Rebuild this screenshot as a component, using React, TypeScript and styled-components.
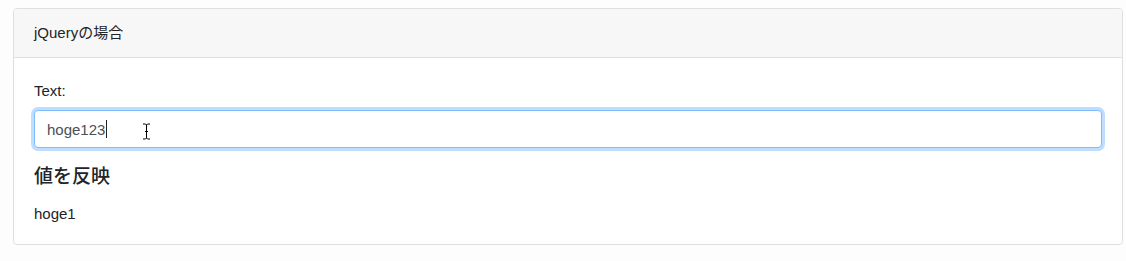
import React from "react";
import styled, { createGlobalStyle } from "styled-components";

const GlobalStyle = createGlobalStyle`
  html, body {
    margin: 0;
    padding: 0;
    background: #fdfdfd;
  }
  body {
    font-family: "Liberation Sans", Arial, "Noto Sans CJK JP", sans-serif;
    font-size: 15px;
    line-height: 1.5;
    color: #212529;
  }
  * { box-sizing: border-box; }
`;

const Page = styled.div`
  padding: 8px 3px 16px 13px;
`;

const Card = styled.section`
  display: flex;
  flex-direction: column;
  width: 1110px;
  background: #fff;
  border: 1px solid #dfdfdf;
  border-radius: 4px;
  overflow: hidden;
`;

const CardHeader = styled.header`
  display: flex;
  align-items: center;
  height: 49px;
  padding: 0 20px;
  background: #f7f7f7;
  border-bottom: 1px solid #dfdfdf;
  font-size: 15px;
  color: #212529;
`;

const CardBody = styled.div`
  display: flex;
  flex-direction: column;
  padding: 22px 20px 19px;
`;

const FormGroup = styled.div`
  display: flex;
  flex-direction: column;
  margin-bottom: 18px;
`;

const Label = styled.label`
  margin-bottom: 7.5px;
  line-height: 22.5px;
`;

const Field = styled.div`
  position: relative;
`;

const Input = styled.input`
  display: block;
  width: 100%;
  height: 38px;
  padding: 0 12px;
  font-family: "Liberation Sans", Arial, sans-serif;
  font-size: 15px;
  color: #495057;
  background: #fff;
  border: 1px solid #80bdff;
  border-radius: 4px;
  box-shadow: 0 0 0 3px rgba(0, 123, 255, 0.25);
  outline: none;
  caret-color: transparent;
`;

const Caret = styled.span<{ $left: number }>`
  position: absolute;
  top: 10px;
  left: ${(p) => p.$left}px;
  width: 1px;
  height: 18px;
  background: #222;
`;

const Pointer = styled.svg`
  position: absolute;
  top: 13px;
  left: 108px;
`;

const Heading = styled.h5`
  margin: 0 0 14px;
  font-family: "Liberation Sans", Arial, "Noto Sans CJK JP", sans-serif;
  font-size: 19px;
  font-weight: 500;
  line-height: 1.2;
  color: #212529;
`;

const Output = styled.p`
  margin: 0;
  line-height: 22.5px;
`;

export default function App() {
  return (
    <>
      <GlobalStyle />
      <Page>
        <Card>
          <CardHeader>jQueryの場合</CardHeader>
          <CardBody>
            <FormGroup>
              <Label htmlFor="text">Text:</Label>
              <Field>
                <Input id="text" type="text" value="hoge123" readOnly />
                <Caret $left={72} />
                <Pointer width="9" height="17" viewBox="0 0 9 17">
                  <path
                    d="M1 1h2.5l1 1 1-1H8M4.5 2v13M1 16h2.5l1-1 1 1H8M3 8.5h3"
                    fill="none"
                    stroke="#fff"
                    strokeWidth="2.6"
                  />
                  <path
                    d="M1 1h2.5l1 1 1-1H8M4.5 2v13M1 16h2.5l1-1 1 1H8M3 8.5h3"
                    fill="none"
                    stroke="#000"
                    strokeWidth="1"
                  />
                </Pointer>
              </Field>
            </FormGroup>
            <Heading>値を反映</Heading>
            <Output>hoge1</Output>
          </CardBody>
        </Card>
      </Page>
    </>
  );
}
